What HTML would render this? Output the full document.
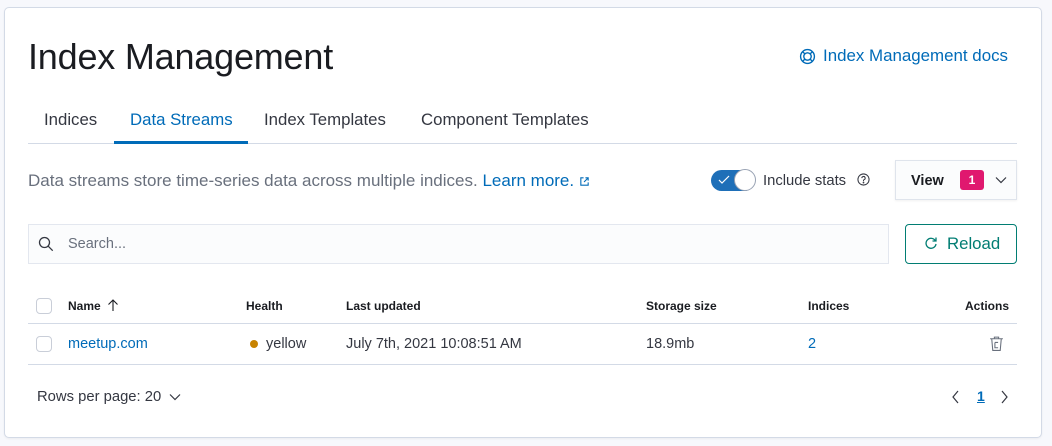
<!DOCTYPE html>
<html><head><style>
*{box-sizing:border-box;margin:0;padding:0}
body{width:1052px;height:446px;background:#f7f8fc;font-family:"Liberation Sans",sans-serif;color:#343741;position:relative;overflow:hidden}
.panel{position:absolute;left:4px;top:7px;width:1038px;height:431px;background:#fff;border:1px solid #d3dae6;border-radius:5px;box-shadow:0 1px 2px rgba(0,0,0,.05)}
.abs{position:absolute;white-space:nowrap}
h1{position:absolute;left:28px;top:36px;font-size:36px;font-weight:400;color:#1a1c21;letter-spacing:-0.2px}
.link{color:#006bb8 !important}
.tab{position:absolute;top:110px;font-size:16.8px;color:#343741}
.hd{font-size:12px;font-weight:700;color:#1a1c21;top:299px}
.td{font-size:14.5px;top:336px;color:#343741}
.cb{position:absolute;width:16px;height:16px;border:1px solid #c9ced8;border-radius:4px;background:#fff;left:36px}
</style></head><body>
<div class="panel"></div>
<h1>Index Management</h1>
<svg class="abs" style="left:799px;top:48px" width="17" height="17" viewBox="0 0 16 16" fill="none" stroke="#006bb8" stroke-width="1.3"><circle cx="8" cy="8" r="6.5"/><circle cx="8" cy="8" r="3.5"/><path d="M3.4 3.4l2.1 2.1M12.6 3.4l-2.1 2.1M3.4 12.6l2.1-2.1M12.6 12.6l-2.1-2.1"/></svg>
<div class="abs link" style="left:823px;top:46px;font-size:16.9px">Index Management docs</div>
<div class="tab" style="left:44px">Indices</div>
<div class="tab" style="left:130px;color:#006bb8">Data Streams</div>
<div class="tab" style="left:264px">Index Templates</div>
<div class="tab" style="left:421px">Component Templates</div>
<div class="abs" style="left:28px;top:143px;width:989px;height:1px;background:#d3dae6"></div>
<div class="abs" style="left:114px;top:141px;width:134px;height:3px;background:#006bb8"></div>
<div class="abs" style="left:28px;top:171px;font-size:17px;color:#69707d">Data streams store time-series data across multiple indices. <span class="link">Learn more.</span> <svg style="vertical-align:-1px;margin-left:0px" width="11" height="11" viewBox="0 0 12 12" fill="none" stroke="#006bb8" stroke-width="1.2"><path d="M5 2H2v8h8V7M7 2h3v3M10 2L5.5 6.5"/></svg></div>
<div class="abs" style="left:711px;top:170px;width:44px;height:21px;border-radius:11px;background:#1e6fb8"></div>
<svg class="abs" style="left:718px;top:175px" width="12" height="10" viewBox="0 0 12 10" fill="none" stroke="#fff" stroke-width="1.2"><path d="M1 5l3 3 7-7"/></svg>
<div class="abs" style="left:734px;top:169px;width:22px;height:22px;border-radius:50%;background:#fff;border:1px solid #98a2b3"></div>
<div class="abs" style="left:763px;top:173px;font-size:14.8px">Include stats</div>
<svg class="abs" style="left:857px;top:173px" width="13" height="13" viewBox="0 0 14 14" fill="none" stroke="#343741" stroke-width="1.1"><circle cx="7" cy="7" r="6"/><path d="M5.2 5.5a1.8 1.8 0 1 1 2.4 1.7c-.4.2-.6.5-.6.9v.6"/><circle cx="7" cy="10.3" r=".4" fill="#343741"/></svg>
<div class="abs" style="left:895px;top:160px;width:122px;height:40px;border:1px solid #dfe4ec;background:#fbfcfd;box-shadow:0 1px 2px rgba(0,0,0,.06)"></div>
<div class="abs" style="left:911px;top:173px;font-size:14.5px;font-weight:700;color:#1a1c21">View</div>
<div class="abs" style="left:960px;top:170px;width:24px;height:20px;border-radius:3px;background:#e0186f;color:#fff;font-size:12px;font-weight:700;text-align:center;line-height:20px">1</div>
<svg class="abs" style="left:994px;top:175px" width="14" height="10" viewBox="0 0 14 10" fill="none" stroke="#343741" stroke-width="1.2"><path d="M2 2.5l5 5 5-5"/></svg>
<div class="abs" style="left:28px;top:224px;width:861px;height:40px;border:1px solid #e3e7ef;background:#fbfcfd"></div>
<svg class="abs" style="left:38px;top:236px" width="16" height="16" viewBox="0 0 16 16" fill="none" stroke="#343741" stroke-width="1.3"><circle cx="6.5" cy="6.5" r="5"/><path d="M10.2 10.2l4.5 4.5"/></svg>
<div class="abs" style="left:68px;top:236px;font-size:14.5px;color:#69707d">Search...</div>
<div class="abs" style="left:905px;top:224px;width:112px;height:40px;border:1px solid #017d73;border-radius:4px"></div>
<svg class="abs" style="left:924px;top:236px" width="14" height="14" viewBox="0 0 14 14" fill="none" stroke="#017d73" stroke-width="1.3"><path d="M11.5 5A5 5 0 1 0 12 8M12 1.5V5H8.5"/></svg>
<div class="abs" style="left:947px;top:234px;font-size:16.8px;color:#017d73">Reload</div>
<div class="cb" style="top:298px"></div>
<div class="abs hd" style="left:68px">Name</div>
<svg class="abs" style="left:107px;top:299px" width="12" height="13" viewBox="0 0 12 13" fill="none" stroke="#1a1c21" stroke-width="1.1"><path d="M6 12V1M1.5 5.5L6 1l4.5 4.5"/></svg>
<div class="abs hd" style="left:246px">Health</div>
<div class="abs hd" style="left:346px">Last updated</div>
<div class="abs hd" style="left:646px">Storage size</div>
<div class="abs hd" style="left:808px">Indices</div>
<div class="abs hd" style="left:965px">Actions</div>
<div class="abs" style="left:28px;top:323px;width:989px;height:1px;background:#d3dae6"></div>
<div class="cb" style="top:336px"></div>
<div class="abs td link" style="left:68px">meetup.com</div>
<div class="abs" style="left:250px;top:340px;width:8px;height:8px;border-radius:50%;background:#c78300"></div>
<div class="abs td" style="left:266px">yellow</div>
<div class="abs td" style="left:346px">July 7th, 2021 10:08:51 AM</div>
<div class="abs td" style="left:646px">18.9mb</div>
<div class="abs td link" style="left:808px">2</div>
<svg class="abs" style="left:988px;top:335px" width="17" height="17" viewBox="0 0 16 16" fill="none" stroke="#69707d" stroke-width="1"><path d="M2 3.5h12M6 3.5V2h4v1.5M3.5 3.5l1 11h7l1-11M6.5 7h3M6.5 7v5h3"/></svg>
<div class="abs" style="left:28px;top:364px;width:989px;height:1px;background:#d3dae6"></div>
<div class="abs" style="left:37px;top:389px;font-size:14.8px">Rows per page: 20</div>
<svg class="abs" style="left:168px;top:392px" width="14" height="10" viewBox="0 0 14 10" fill="none" stroke="#343741" stroke-width="1.2"><path d="M2 2.5l5 5 5-5"/></svg>
<svg class="abs" style="left:951px;top:389px" width="10" height="16" viewBox="0 0 10 16" fill="none" stroke="#343741" stroke-width="1.2"><path d="M7 2L2 8l5 6"/></svg>
<div class="abs" style="left:977px;top:388px;font-size:14px;font-weight:700;color:#006bb8;text-decoration:underline">1</div>
<svg class="abs" style="left:999px;top:389px" width="10" height="16" viewBox="0 0 10 16" fill="none" stroke="#343741" stroke-width="1.2"><path d="M3 2l5 6-5 6"/></svg>
</body></html>
